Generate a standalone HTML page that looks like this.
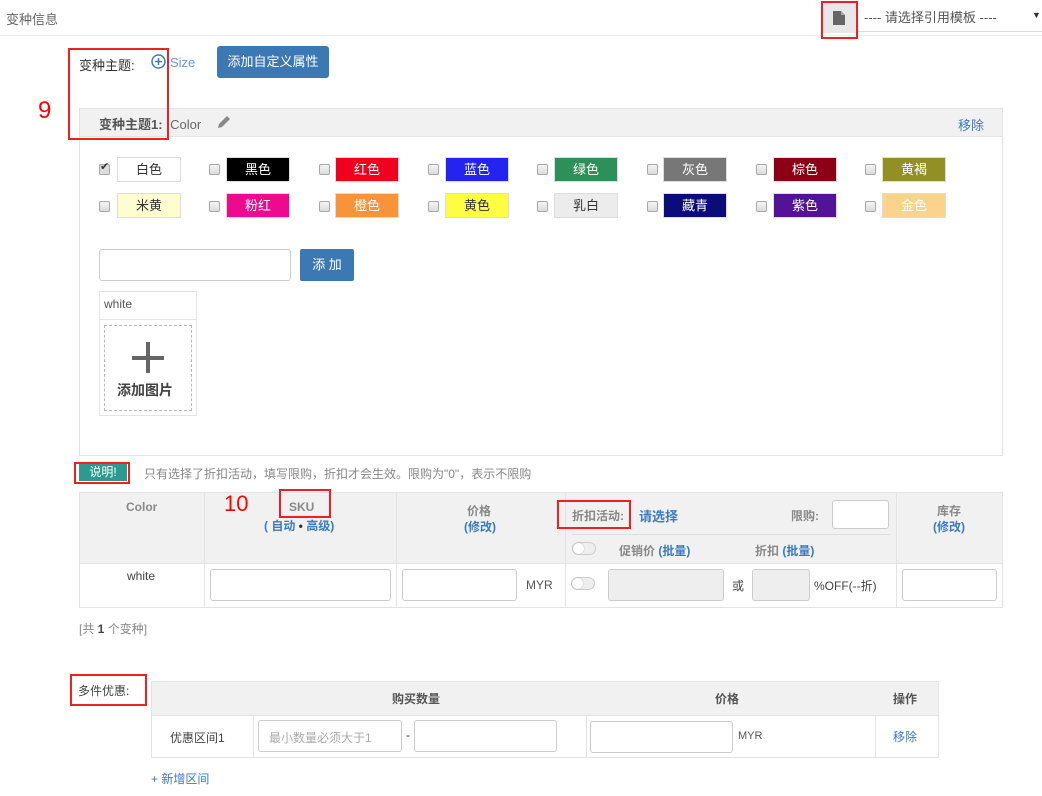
<!DOCTYPE html>
<html><head><meta charset="utf-8"><style>
*{box-sizing:border-box;margin:0;padding:0}
body{width:1042px;height:796px;position:relative;background:#fff;font-family:"Liberation Sans","Noto Sans CJK SC",sans-serif;font-size:12px;color:#333;overflow:hidden}
.a{position:absolute}
.red{position:absolute;border:2px solid #f02020}
.blue{color:#3b7bbf}
.cb{position:absolute;width:11px;height:11px;border:1px solid #a8a8a8;border-radius:2px;background:linear-gradient(#f4f4f4,#dcdcdc)}
.sw{position:absolute;width:64px;height:25px;border:1px solid #ddd;text-align:center;line-height:23px;font-size:13px;color:#fff}
.inp{position:absolute;border:1px solid #ccc;border-radius:3px;background:#fff}
.dis{background:#eee}
.tog{position:absolute;width:24px;height:13px;border:1px solid #ccc;border-radius:7px;background:#eee}
.tog::after{content:"";position:absolute;left:0;top:0;width:11px;height:11px;border-radius:50%;background:#fff;box-shadow:0 0 1px #888}
.vl{position:absolute;width:1px;background:#e3e3e3}
.hl{position:absolute;height:1px;background:#e3e3e3}
.g{color:#888;font-weight:bold}
</style></head><body>
<div class="a" style="left:6px;top:9px;color:#666;font-size:13px">变种信息</div>
<div class="hl" style="left:0;top:35px;width:1042px;background:#eee"></div>
<div class="a" style="left:823px;top:3px;width:34px;height:30px;background:#e8e8e8"></div>
<svg class="a" style="left:832px;top:10px" width="14" height="16"><path d="M1 1h8l4 4v10H1z" fill="#666"/><path d="M9 1v4h4" fill="#aaa"/></svg>
<div class="a" style="left:857px;top:3px;width:185px;height:29px;border-bottom:1px solid #ddd;color:#555;font-size:13px;line-height:29px;padding-left:7px">---- 请选择引用模板 ----</div>
<div class="a" style="left:1032px;top:10px;font-size:9px;color:#333">▼</div>
<div class="red" style="left:821px;top:1px;width:37px;height:38px"></div>

<div class="a" style="left:79px;top:55px;font-size:13px">变种主题:</div>
<svg class="a" style="left:151px;top:54px" width="15" height="15"><circle cx="7.5" cy="7.5" r="6.5" fill="none" stroke="#3b7bbf" stroke-width="1.5"/><path d="M7.5 4v7M4 7.5h7" stroke="#3b7bbf" stroke-width="1.5"/></svg>
<div class="a blue" style="left:170px;top:55px;font-size:13px;color:#6a9bd0">Size</div>
<div class="a" style="left:217px;top:46px;width:112px;height:32px;background:#3c78b4;border-radius:3px;color:#fff;font-size:13px;text-align:center;line-height:32px">添加自定义属性</div>
<div class="a" style="left:38px;top:97px;color:#f00;font-size:24px">9</div>

<div class="a" style="left:79px;top:108px;width:924px;height:348px;border:1px solid #e3e3e3"></div>
<div class="a" style="left:80px;top:109px;width:922px;height:28px;background:#f1f1f1;border-bottom:1px solid #e3e3e3"></div>
<div class="a" style="left:99px;top:114px;font-size:13px;color:#555;font-weight:bold">变种主题1: <span style="font-weight:normal;color:#666;margin-left:4px">Color</span></div>
<svg class="a" style="left:216px;top:114px" width="16" height="16"><path d="M2 14l1-4 8-8 3 3-8 8z" fill="#888"/></svg>
<div class="a blue" style="left:958px;top:115px;font-size:13px">移除</div>
<div class="red" style="left:68px;top:48px;width:101px;height:92px"></div>

<div class="cb" style="left:99px;top:164px;background:#ddd"></div>
<div class="a" style="left:100px;top:160px;font-size:11px;color:#333">✔</div>
<div class="sw" style="left:117px;top:157px;color:#333;background:#fff">白色</div>
<div class="cb" style="left:209px;top:164px"></div><div class="sw" style="left:226px;top:157px;background:#000">黑色</div>
<div class="cb" style="left:319px;top:164px"></div><div class="sw" style="left:335px;top:157px;background:#f0001e">红色</div>
<div class="cb" style="left:428px;top:164px"></div><div class="sw" style="left:445px;top:157px;background:#2424f0">蓝色</div>
<div class="cb" style="left:537px;top:164px"></div><div class="sw" style="left:554px;top:157px;background:#2d9058">绿色</div>
<div class="cb" style="left:647px;top:164px"></div><div class="sw" style="left:663px;top:157px;background:#777">灰色</div>
<div class="cb" style="left:756px;top:164px"></div><div class="sw" style="left:773px;top:157px;background:#8b0014">棕色</div>
<div class="cb" style="left:865px;top:164px"></div><div class="sw" style="left:882px;top:157px;background:#928f25">黄褐</div>

<div class="cb" style="left:99px;top:201px"></div><div class="sw" style="left:117px;top:193px;background:#fdfdd0;color:#333">米黄</div>
<div class="cb" style="left:209px;top:201px"></div><div class="sw" style="left:226px;top:193px;background:#ee0a8f">粉红</div>
<div class="cb" style="left:319px;top:201px"></div><div class="sw" style="left:335px;top:193px;background:#f79338">橙色</div>
<div class="cb" style="left:428px;top:201px"></div><div class="sw" style="left:445px;top:193px;background:#fdfd42;color:#333">黄色</div>
<div class="cb" style="left:537px;top:201px"></div><div class="sw" style="left:554px;top:193px;background:#ececec;color:#333">乳白</div>
<div class="cb" style="left:647px;top:201px"></div><div class="sw" style="left:663px;top:193px;background:#0b0b7c">藏青</div>
<div class="cb" style="left:756px;top:201px"></div><div class="sw" style="left:773px;top:193px;background:#541296">紫色</div>
<div class="cb" style="left:865px;top:201px"></div><div class="sw" style="left:882px;top:193px;background:#fbd38d">金色</div>

<div class="inp" style="left:99px;top:249px;width:192px;height:32px"></div>
<div class="a" style="left:300px;top:249px;width:54px;height:32px;background:#3c78b4;border-radius:2px;color:#fff;font-size:13px;text-align:center;line-height:32px">添 加</div>
<div class="a" style="left:99px;top:291px;width:98px;height:125px;border:1px solid #e3e3e3"></div>
<div class="hl" style="left:99px;top:319px;width:98px"></div>
<div class="a" style="left:104px;top:297px;color:#555">white</div>
<div class="a" style="left:104px;top:325px;width:88px;height:86px;border:1px dashed #bbb"></div>
<div class="a" style="left:132px;top:356px;width:32px;height:4px;background:#666"></div>
<div class="a" style="left:146px;top:342px;width:4px;height:31px;background:#666"></div>
<div class="a" style="left:117px;top:380px;font-size:14px;font-weight:bold;color:#444">添加图片</div>

<div class="a" style="left:79px;top:464px;width:48px;height:17px;background:#2d9a90;color:#fff;font-size:12px;text-align:center;line-height:17px">说明!</div>
<div class="red" style="left:74px;top:462px;width:56px;height:22px"></div>
<div class="a" style="left:144px;top:465px;color:#888;font-size:12px">只有选择了折扣活动，填写限购，折扣才会生效。限购为"0"，表示不限购</div>

<div class="a" style="left:79px;top:492px;width:924px;height:71px;background:#f1f1f1"></div>
<div class="a" style="left:79px;top:492px;width:924px;height:116px;border:1px solid #e3e3e3"></div>
<div class="hl" style="left:79px;top:563px;width:924px"></div>
<div class="vl" style="left:204px;top:492px;height:116px"></div>
<div class="vl" style="left:396px;top:492px;height:116px"></div>
<div class="vl" style="left:565px;top:492px;height:116px"></div>
<div class="vl" style="left:896px;top:492px;height:116px"></div>
<div class="hl" style="left:572px;top:534px;width:318px;background:#ddd"></div>
<div class="a g" style="left:126px;top:500px">Color</div>
<div class="a" style="left:224px;top:491px;color:#f00;font-size:22px">10</div>
<div class="a g" style="left:289px;top:500px">SKU</div>
<div class="red" style="left:279px;top:489px;width:52px;height:29px"></div>
<div class="a blue" style="left:264px;top:517px;font-weight:bold">( 自动 <span style="color:#333">•</span> 高级)</div>
<div class="a g" style="left:467px;top:502px">价格</div>
<div class="a blue" style="left:464px;top:518px;font-weight:bold">(修改)</div>
<div class="a g" style="left:572px;top:507px">折扣活动:</div>
<div class="red" style="left:557px;top:500px;width:74px;height:29px"></div>
<div class="a blue" style="left:639px;top:506px;font-weight:bold;font-size:13px">请选择</div>
<div class="a g" style="left:791px;top:507px">限购:</div>
<div class="inp" style="left:832px;top:500px;width:57px;height:29px"></div>
<div class="tog" style="left:572px;top:542px"></div>
<div class="a g" style="left:619px;top:542px">促销价 <span class="blue">(批量)</span></div>
<div class="a g" style="left:755px;top:542px">折扣 <span class="blue">(批量)</span></div>
<div class="a g" style="left:937px;top:502px">库存</div>
<div class="a blue" style="left:933px;top:518px;font-weight:bold">(修改)</div>

<div class="a" style="left:127px;top:569px;color:#444">white</div>
<div class="inp" style="left:210px;top:569px;width:181px;height:32px"></div>
<div class="inp" style="left:402px;top:569px;width:115px;height:32px"></div>
<div class="a" style="left:526px;top:578px;color:#555">MYR</div>
<div class="tog" style="left:571px;top:577px"></div>
<div class="inp dis" style="left:608px;top:569px;width:116px;height:32px"></div>
<div class="a" style="left:732px;top:577px;color:#444">或</div>
<div class="inp dis" style="left:752px;top:569px;width:58px;height:32px"></div>
<div class="a" style="left:814px;top:577px;color:#444">%OFF(--折)</div>
<div class="inp" style="left:902px;top:569px;width:95px;height:32px"></div>
<div class="a" style="left:79px;top:620px;color:#888">[共 <b style="color:#444">1</b> 个变种]</div>

<div class="a" style="left:78px;top:682px;color:#444;font-size:12px">多件优惠:</div>
<div class="red" style="left:70px;top:674px;width:77px;height:32px"></div>
<div class="a" style="left:151px;top:681px;width:788px;height:34px;background:#f1f1f1"></div>
<div class="a" style="left:151px;top:681px;width:788px;height:77px;border:1px solid #e3e3e3"></div>
<div class="hl" style="left:151px;top:715px;width:788px"></div>
<div class="vl" style="left:253px;top:715px;height:43px"></div>
<div class="vl" style="left:586px;top:715px;height:43px"></div>
<div class="vl" style="left:875px;top:715px;height:43px"></div>
<div class="a g" style="left:392px;top:690px;color:#555">购买数量</div>
<div class="a g" style="left:715px;top:690px;color:#555">价格</div>
<div class="a g" style="left:893px;top:690px;color:#555">操作</div>
<div class="a" style="left:170px;top:729px;color:#444">优惠区间1</div>
<div class="inp" style="left:258px;top:720px;width:144px;height:32px;color:#aaa;padding:8px 0 0 10px">最小数量必须大于1</div>
<div class="a" style="left:406px;top:728px">-</div>
<div class="inp" style="left:414px;top:720px;width:143px;height:32px"></div>
<div class="inp" style="left:590px;top:721px;width:143px;height:32px"></div>
<div class="a" style="left:738px;top:730px;color:#555;font-size:11px">MYR</div>
<div class="a blue" style="left:893px;top:728px">移除</div>
<div class="a blue" style="left:151px;top:770px">+ 新增区间</div>
</body></html>
